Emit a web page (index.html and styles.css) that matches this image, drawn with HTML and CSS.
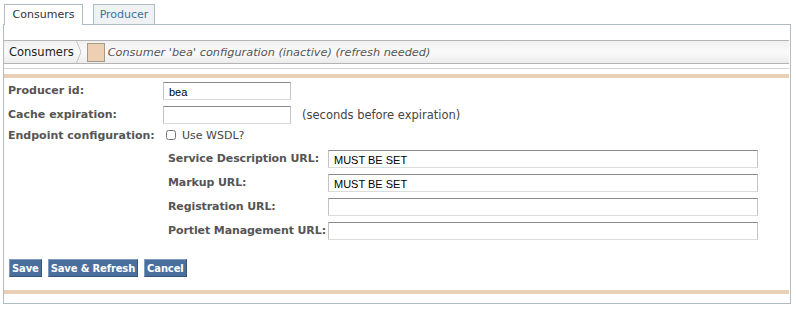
FILE: index.html
```html
<!DOCTYPE html>
<html lang="en">
<head>
  <meta charset="UTF-8">
  <title>WSRP Admin - Consumer</title>
  <link rel="stylesheet" href="styles.css">
</head>
<body>

  <div class="tabs">
    <div class="tab tab-active">Consumers</div>
    <div class="tab">Producer</div>
  </div>

  <div class="panel">
    <div class="crumbs">
      <span class="crumb-root">Consumers</span>
      <svg class="crumb-sep" width="6" height="22" viewBox="0 0 6 22">
        <polyline points="0.5,0 5,11 0.5,22" fill="none" stroke="#c4c4c4" stroke-width="1"/>
      </svg>
      <span class="swatch"></span>
      <span class="crumb-title">Consumer 'bea' configuration (inactive) (refresh needed)</span>
    </div>
    <div class="rule"></div>
    <div class="band"></div>

    <form class="form">
      <label class="lbl" for="pid">Producer id:</label>
      <div class="cell"><input class="field short" id="pid" type="text" value="bea"></div>

      <label class="lbl" for="cache">Cache expiration:</label>
      <div class="cell"><input class="field short" id="cache" type="text"><span class="hint">(seconds before expiration)</span></div>

      <span class="lbl ep">Endpoint configuration:</span>
      <div class="cell ep">
        <label class="check"><input type="checkbox"> Use WSDL?</label>
      </div>

      <div class="endpoints">
        <label class="lbl" for="sd">Service Description URL:</label>
        <input class="field long" id="sd" type="text" value="MUST BE SET">
        <label class="lbl" for="mk">Markup URL:</label>
        <input class="field long" id="mk" type="text" value="MUST BE SET">
        <label class="lbl" for="rg">Registration URL:</label>
        <input class="field long" id="rg" type="text">
        <label class="lbl" for="pm">Portlet Management URL:</label>
        <input class="field long" id="pm" type="text">
      </div>

      <div class="buttons">
        <button type="button">Save</button>
        <button type="button">Save &amp; Refresh</button>
        <button type="button">Cancel</button>
      </div>
    </form>

    <div class="band bottom"></div>
  </div>

</body>
</html>
```

FILE: styles.css
```css
body {
  margin: 0;
  padding: 4px 6px 0 3px;
  font-family: 'DejaVu Sans', Verdana, sans-serif;
  font-size: 11px;
  color: #333;
  background: #fff;
}

.tabs {
  display: flex;
  gap: 10px;
  padding-left: 1px;
  height: 20px;
  position: relative;
  z-index: 1;
}

.tab {
  box-sizing: border-box;
  height: 20px;
  padding: 3px 0 0 0;
  width: 62px;
  text-align: center;
  border: 1px solid #aebcc4;
  border-bottom: none;
  background: #eef2f5;
  color: #3f6f9f;
  font-size: 11px;
}

.tab-active {
  background: #fff;
  color: #333;
  height: 21px;
  width: 79px;
}

.panel {
  box-sizing: border-box;
  width: 788px;
  height: 280px;
  border: 1px solid #aebcc4;
  padding-top: 15px;
}

.crumbs {
  display: flex;
  align-items: center;
  height: 22px;
  margin-right: 1px;
  border-top: 1px solid #b4b4b4;
  border-bottom: 1px solid #b4b4b4;
  background: linear-gradient(#f0f0f0, #fafafa 50%, #ececec);
}

.crumb-root {
  padding-left: 5px;
  font-size: 11.5px;
  color: #222;
}

.crumb-sep {
  margin: 0 5px 0 2px;
}

.swatch {
  box-sizing: border-box;
  width: 18px;
  height: 19px;
  background: #edcfb4;
  border: 1px solid #a89888;
}

.crumb-title {
  margin-left: 3px;
  font-style: italic;
  font-size: 11.3px;
  color: #555;
}

.rule {
  height: 1px;
  margin-top: 4px;
  margin-right: 1px;
  background: #d2d2d2;
}

.band {
  height: 4px;
  margin-top: 5px;
  margin-right: 1px;
  background: #e9cfb3;
}

.band.bottom {
  margin-top: 13px;
}

.form {
  display: grid;
  grid-template-columns: 155px 1fr;
  row-gap: 6px;
  padding: 4px 0 0 4px;
}

.lbl {
  font-weight: bold;
  color: #555;
  padding-top: 2px;
  white-space: nowrap;
}

.cell {
  display: flex;
  align-items: center;
  height: 18px;
}

.lbl.ep {
  margin-top: -3px;
}

.cell.ep {
  margin-top: -3px;
  height: 16px;
}

.field {
  box-sizing: border-box;
  height: 18px;
  margin: 0;
  padding: 1px 5px 0;
  border: 1px solid #c4c4c4;
  border-top-color: #8a8a8a;
  border-bottom-color: #dcdcdc;
  font-family: 'Liberation Sans', Arial, sans-serif;
  font-size: 11px;
  color: #000;
}

.short {
  width: 128px;
}

.hint {
  margin-left: 11px;
  font-size: 11.5px;
  color: #444;
}

.check {
  display: flex;
  align-items: center;
  gap: 6px;
  color: #444;
}

.check input {
  width: 10px;
  height: 10px;
  margin: 0 0 0 3px;
}

.endpoints {
  grid-column: 1 / 3;
  display: grid;
  grid-template-columns: 160px 430px;
  row-gap: 6px;
  padding-left: 160px;
  margin-top: 1px;
}

.endpoints .lbl {
  letter-spacing: -0.1px;
}

.long {
  width: 430px;
}

.buttons {
  grid-column: 1 / 3;
  display: flex;
  gap: 6px;
  margin-top: 13px;
  padding-left: 1px;
}

button {
  height: 18px;
  padding: 0 2px;
  background: #4b6f9d;
  color: #fff;
  font-family: 'DejaVu Sans', Verdana, sans-serif;
  font-size: 10px;
  font-weight: bold;
  letter-spacing: -0.15px;
  border: 1px solid #7f9cbf;
  border-bottom-color: #36557c;
  border-right-color: #36557c;
  cursor: pointer;
}
```
